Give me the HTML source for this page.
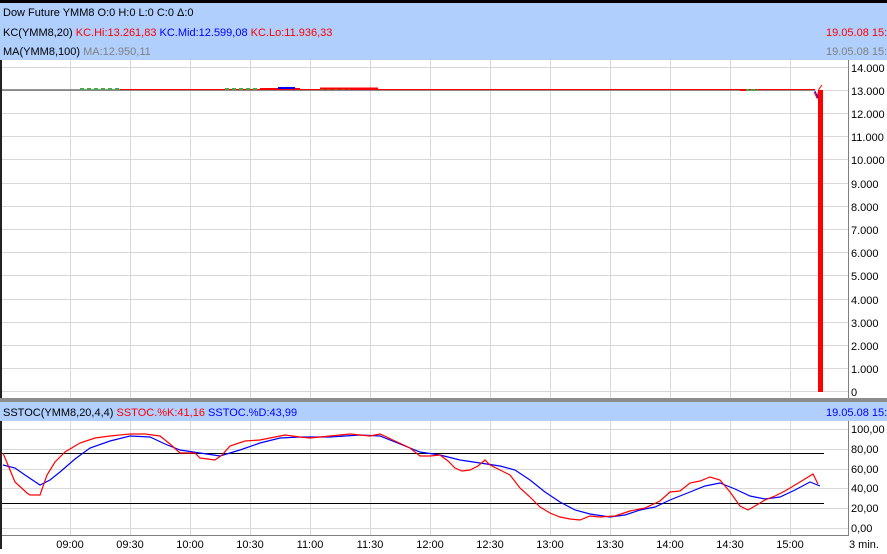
<!DOCTYPE html>
<html><head><style>
body{margin:0;width:887px;height:549px;overflow:hidden;background:#fff;font-family:"Liberation Sans",Arial,sans-serif;}
svg text{font-family:"Liberation Sans",Arial,sans-serif;font-size:11px;}
</style></head><body>
<svg width="887" height="549" viewBox="0 0 887 549" xmlns="http://www.w3.org/2000/svg">
<rect x="0" y="0" width="887" height="549" fill="#fff"/>
<rect x="0" y="0" width="887" height="3" fill="#000"/>
<rect x="0" y="3" width="887" height="57" fill="#b0cffd"/>
<text x="3" y="16" fill="#000">Dow Future YMM8 O:0 H:0 L:0 C:0 Δ:0</text>
<text x="3" y="36"><tspan fill="#000">KC(YMM8,20) </tspan><tspan fill="#f00">KC.Hi:13.261,83 </tspan><tspan fill="#00f">KC.Mid:12.599,08 </tspan><tspan fill="#f00">KC.Lo:11.936,33</tspan></text>
<text x="3" y="55"><tspan fill="#000">MA(YMM8,100) </tspan><tspan fill="#808080">MA:12.950,11</tspan></text>
<text x="826" y="36" fill="#f00">19.05.08 15:</text>
<text x="826" y="55" fill="#808080">19.05.08 15:</text>
<g stroke="#d8d8d8" stroke-width="1">
<line x1="2" y1="67.5" x2="848" y2="67.5"/><line x1="2" y1="90.5" x2="848" y2="90.5"/>
<line x1="2" y1="113.5" x2="848" y2="113.5"/><line x1="2" y1="136.5" x2="848" y2="136.5"/>
<line x1="2" y1="159.5" x2="848" y2="159.5"/><line x1="2" y1="183.5" x2="848" y2="183.5"/>
<line x1="2" y1="206.5" x2="848" y2="206.5"/><line x1="2" y1="229.5" x2="848" y2="229.5"/>
<line x1="2" y1="252.5" x2="848" y2="252.5"/><line x1="2" y1="275.5" x2="848" y2="275.5"/>
<line x1="2" y1="299.5" x2="848" y2="299.5"/><line x1="2" y1="322.5" x2="848" y2="322.5"/>
<line x1="2" y1="345.5" x2="848" y2="345.5"/><line x1="2" y1="368.5" x2="848" y2="368.5"/>
<line x1="2" y1="391.5" x2="848" y2="391.5"/>
<line x1="2" y1="429.5" x2="848" y2="429.5"/><line x1="2" y1="449.5" x2="848" y2="449.5"/>
<line x1="2" y1="469.5" x2="848" y2="469.5"/><line x1="2" y1="488.5" x2="848" y2="488.5"/>
<line x1="2" y1="508.5" x2="848" y2="508.5"/><line x1="2" y1="528.5" x2="848" y2="528.5"/>
<path d="M70.5 60V398M130.5 60V398M190.5 60V398M250.5 60V398M310.5 60V398M370.5 60V398M430.5 60V398M490.5 60V398M550.5 60V398M610.5 60V398M670.5 60V398M730.5 60V398M790.5 60V398"/>
<path d="M70.5 421V535M130.5 421V535M190.5 421V535M250.5 421V535M310.5 421V535M370.5 421V535M430.5 421V535M490.5 421V535M550.5 421V535M610.5 421V535M670.5 421V535M730.5 421V535M790.5 421V535"/>
</g>
<rect x="0" y="60" width="2" height="489" fill="#222"/>
<line x1="848.5" y1="60" x2="848.5" y2="398" stroke="#808080"/>
<line x1="848.5" y1="421" x2="848.5" y2="536" stroke="#808080"/>
<line x1="2" y1="535.5" x2="848" y2="535.5" stroke="#808080"/>
<!-- price line -->
<line x1="2" y1="90" x2="815" y2="90" stroke="#707070" stroke-width="1.5"/>
<line x1="120" y1="89.5" x2="815" y2="89.5" stroke="#f00" stroke-width="1"/>
<g stroke="#4a4" stroke-width="2"><line x1="80" y1="89" x2="120" y2="89" stroke-dasharray="4 3"/><line x1="225" y1="89" x2="260" y2="89" stroke-dasharray="4 3"/><line x1="320" y1="89" x2="350" y2="89" stroke-dasharray="4 3"/><line x1="745" y1="90" x2="758" y2="90" stroke-dasharray="4 2"/></g>
<rect x="260" y="88" width="40" height="2" fill="#f00"/><rect x="278" y="87" width="17" height="2" fill="#00f"/>
<rect x="320" y="87.5" width="58" height="2" fill="#f00"/><rect x="740" y="89" width="6" height="2" fill="#f00"/>
<rect x="818" y="90" width="5" height="302" fill="#f00"/>
<path d="M814 92l3 6 2 -9 3-4" stroke="#f00" fill="none"/><path d="M815 91l3 7" stroke="#00f" fill="none"/>
<g fill="#000">
<text x="851" y="72">14.000</text><text x="851" y="95">13.000</text><text x="851" y="118">12.000</text>
<text x="851" y="141">11.000</text><text x="851" y="164">10.000</text><text x="851" y="188">9.000</text>
<text x="851" y="211">8.000</text><text x="851" y="234">7.000</text><text x="851" y="257">6.000</text>
<text x="851" y="280">5.000</text><text x="851" y="304">4.000</text><text x="851" y="327">3.000</text>
<text x="851" y="350">2.000</text><text x="851" y="373">1.000</text><text x="851" y="396">0</text>
</g>
<rect x="0" y="398" width="887" height="4" fill="#8c8c8c"/>
<rect x="0" y="402" width="887" height="19" fill="#b0cffd"/>
<text x="3" y="416"><tspan fill="#000">SSTOC(YMM8,20,4,4) </tspan><tspan fill="#f00">SSTOC.%K:41,16 </tspan><tspan fill="#00f">SSTOC.%D:43,99</tspan></text>
<text x="826" y="416" fill="#00f">19.05.08 15:</text>
<line x1="2" y1="453.5" x2="824" y2="453.5" stroke="#000"/>
<line x1="2" y1="503.5" x2="824" y2="503.5" stroke="#000"/>
<polyline fill="none" stroke="#00f" stroke-width="1.2" points="3,465 15,468 25,475 40,485 50,480 60,472 75,459 90,448 110,441 130,436 150,437 165,444 180,450 200,453 220,456 240,450 260,443 280,438 300,437 330,437 360,435 380,436 400,444 420,452 440,455 460,460 480,463 500,466 515,470 530,480 545,492 560,502 575,510 590,514 610,517 625,515 640,510 655,507 670,500 690,492 705,486 720,483 735,489 750,496 765,499 780,497 795,490 810,482 820,486"/>
<polyline fill="none" stroke="#f00" stroke-width="1.2" points="3,453 10,470 15,482 27,493 30,495 40,495 47,475 55,462 65,452 80,443 95,438 110,436 130,434 145,434 160,436 170,444 180,453 195,453 200,458 215,460 222,455 230,446 245,441 260,440 275,437 285,435 300,437 310,438 330,436 350,434 370,436 380,434 395,441 410,448 420,456 430,456 440,455 448,461 455,468 462,471 470,470 478,466 485,460 490,465 500,470 510,475 520,488 530,497 540,507 550,513 560,517 570,519 580,520 590,516 600,517 615,516 630,511 645,508 660,501 670,492 680,491 690,483 700,481 710,477 720,480 730,492 740,506 748,510 755,506 765,500 775,496 785,491 800,482 813,474 818,484"/>
<g fill="#000">
<text x="851" y="433">100,00</text><text x="851" y="453">80,00</text><text x="851" y="473">60,00</text>
<text x="851" y="492">40,00</text><text x="851" y="512">20,00</text><text x="851" y="532">0,00</text>
<text x="849" y="548">3 min.</text>
</g>
<g fill="#000" text-anchor="middle">
<text x="70" y="548">09:00</text><text x="130" y="548">09:30</text><text x="190" y="548">10:00</text>
<text x="250" y="548">10:30</text><text x="310" y="548">11:00</text><text x="370" y="548">11:30</text>
<text x="430" y="548">12:00</text><text x="490" y="548">12:30</text><text x="550" y="548">13:00</text>
<text x="610" y="548">13:30</text><text x="670" y="548">14:00</text><text x="730" y="548">14:30</text>
<text x="790" y="548">15:00</text>
</g>
</svg>
</body></html>
